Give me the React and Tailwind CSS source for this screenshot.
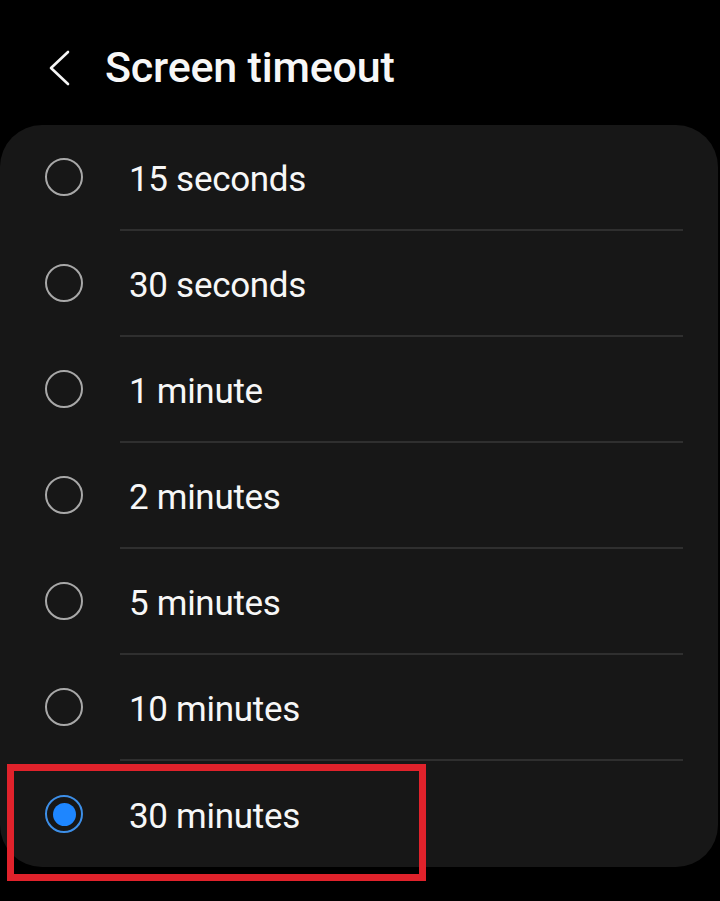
import React from "react";

const options = [
  "15 seconds",
  "30 seconds",
  "1 minute",
  "2 minutes",
  "5 minutes",
  "10 minutes",
  "30 minutes",
];

function Radio({ checked }) {
  if (checked) {
    return (
      <div className="w-[38px] h-[38px] rounded-full border-[2px] border-[#3d8fe8] flex items-center justify-center">
        <div className="w-[23px] h-[23px] rounded-full bg-[#1e86ff]" />
      </div>
    );
  }
  return <div className="w-[38px] h-[38px] rounded-full border-[2px] border-[#a8a8a8]" />;
}

export default function App() {
  return (
    <div
      className="relative w-[720px] h-[901px] bg-black text-[#f7f7f7] overflow-hidden"
      style={{ fontFamily: "Roboto, 'Noto Sans', sans-serif" }}
    >
      <div className="h-[125px] flex items-center pl-[47px] pt-[10px]">
        <svg width="24" height="36" viewBox="0 0 24 36" className="mr-[34px]">
          <polyline
            points="21,2 4,18 21,34"
            fill="none"
            stroke="#f5f5f5"
            strokeWidth="2.6"
            strokeLinecap="round"
            strokeLinejoin="round"
          />
        </svg>
        <span className="text-[43px] font-medium tracking-[-0.2px] leading-none">Screen timeout</span>
      </div>
      <div className="w-[718px] bg-[#171717] rounded-[42px] overflow-hidden">
        {options.map((o, i) => (
          <div key={o} className="h-[106px] flex flex-col">
            <div className="flex-1 flex items-center pl-[45px]">
              <Radio checked={i === options.length - 1} />
              <span className="ml-[46px] text-[35px] tracking-[-0.3px] leading-none pt-[5px]">{o}</span>
            </div>
            {i < options.length - 1 && <div className="ml-[120px] mr-[35px] h-[2px] bg-[#2f2f2f]" />}
          </div>
        ))}
      </div>
      <div className="absolute left-[7px] top-[764px] w-[419px] h-[117px] border-[7px] border-[#e0222b]" />
    </div>
  );
}
